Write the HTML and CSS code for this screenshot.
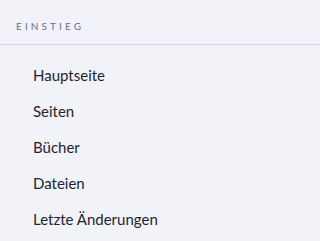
FILE: index.html
```html
<!DOCTYPE html>
<html lang="de">
<head>
<meta charset="utf-8">
<link rel="stylesheet" href="styles.css">
</head>
<body>
<nav class="sidebar">
  <div class="section-title">Einstieg</div>
  <ul class="nav-list">
    <li class="nav-item">Hauptseite</li>
    <li class="nav-item">Seiten</li>
    <li class="nav-item">Bücher</li>
    <li class="nav-item">Dateien</li>
    <li class="nav-item">Letzte Änderungen</li>
  </ul>
</nav>
</body>
</html>
```
FILE: styles.css
```css
html, body {
  margin: 0;
  padding: 0;
  background: #f2f3f8;
}
.sidebar {
  font-family: Lato, "Open Sans", sans-serif;
  padding-top: 20px;
}
.section-title {
  font-size: 10px;
  line-height: 12px;
  letter-spacing: 3.1px;
  text-transform: uppercase;
  color: #6b6f8c;
  padding: 0 16px 12px;
  border-bottom: 1px solid #d4d6de;
}
.nav-list {
  list-style: none;
  margin: 0;
  padding: 12px 0 0 33px;
}
.nav-item {
  font-size: 15px;
  line-height: 36px;
  color: #22252f;
}
```
